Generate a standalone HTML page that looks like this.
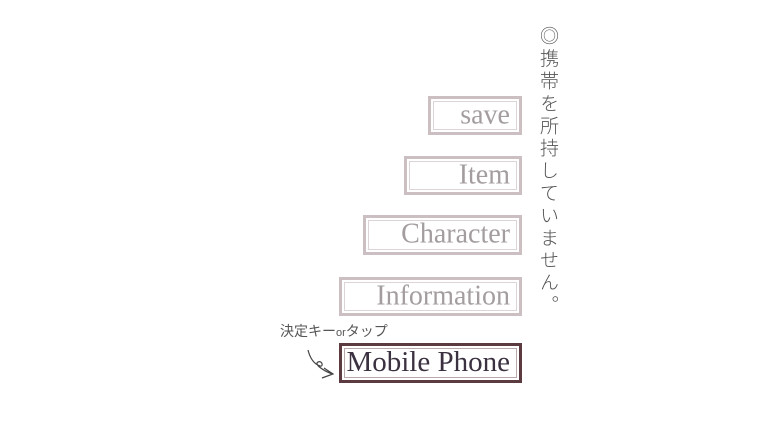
<!DOCTYPE html>
<html><head><meta charset="utf-8"><style>
html,body{margin:0;padding:0;background:#fff;width:768px;height:432px;overflow:hidden;position:relative}
.b{position:absolute;box-sizing:border-box;border:3px solid #cbbfc2;background:#fff}
.b::after{content:"";position:absolute;left:2px;top:2px;right:2px;bottom:2px;border:1px solid #ddd4d6}
.b span{position:absolute;right:9px;top:50%;transform:translateY(-52%);font-family:"Liberation Serif",serif;font-size:28px;color:#a39d9f;white-space:nowrap;line-height:1}
.m{border-color:#5b3a40}
.m::after{border-color:#b9a9ab}
.m span{color:#3b3140;font-size:29px;right:9px}
.v{position:absolute;left:536px;top:26px;writing-mode:vertical-rl;font-family:"Liberation Sans","Noto Sans CJK JP",sans-serif;font-size:19px;line-height:22px;color:#555;letter-spacing:3.4px;font-weight:300}
.h{position:absolute;left:280px;top:321px;font-family:"Liberation Sans","Noto Sans CJK JP",sans-serif;font-size:14px;color:#555;white-space:nowrap}
</style></head><body>
<div class="b" style="left:428px;top:96px;width:94px;height:39px"><span>save</span></div>
<div class="b" style="left:404px;top:156px;width:118px;height:39px"><span>Item</span></div>
<div class="b" style="left:363px;top:215px;width:159px;height:40px"><span>Character</span></div>
<div class="b" style="left:339px;top:277px;width:183px;height:39px"><span>Information</span></div>
<div class="b m" style="left:339px;top:343px;width:183px;height:40px"><span>Mobile Phone</span></div>
<div class="v">◎携帯を所持していません。</div>
<div class="h">決定キー<span style="font-size:11px">or</span>タップ</div>
<svg style="position:absolute;left:300px;top:348px" width="40" height="34" viewBox="0 0 40 34"><path d="M8 2 C10 10 14 16 20 18 C24 19 22 12 18 14 C14 16 22 22 32 26 M24 20 L33 26 L22 30" fill="none" stroke="#444" stroke-width="1.2"/></svg>
</body></html>
